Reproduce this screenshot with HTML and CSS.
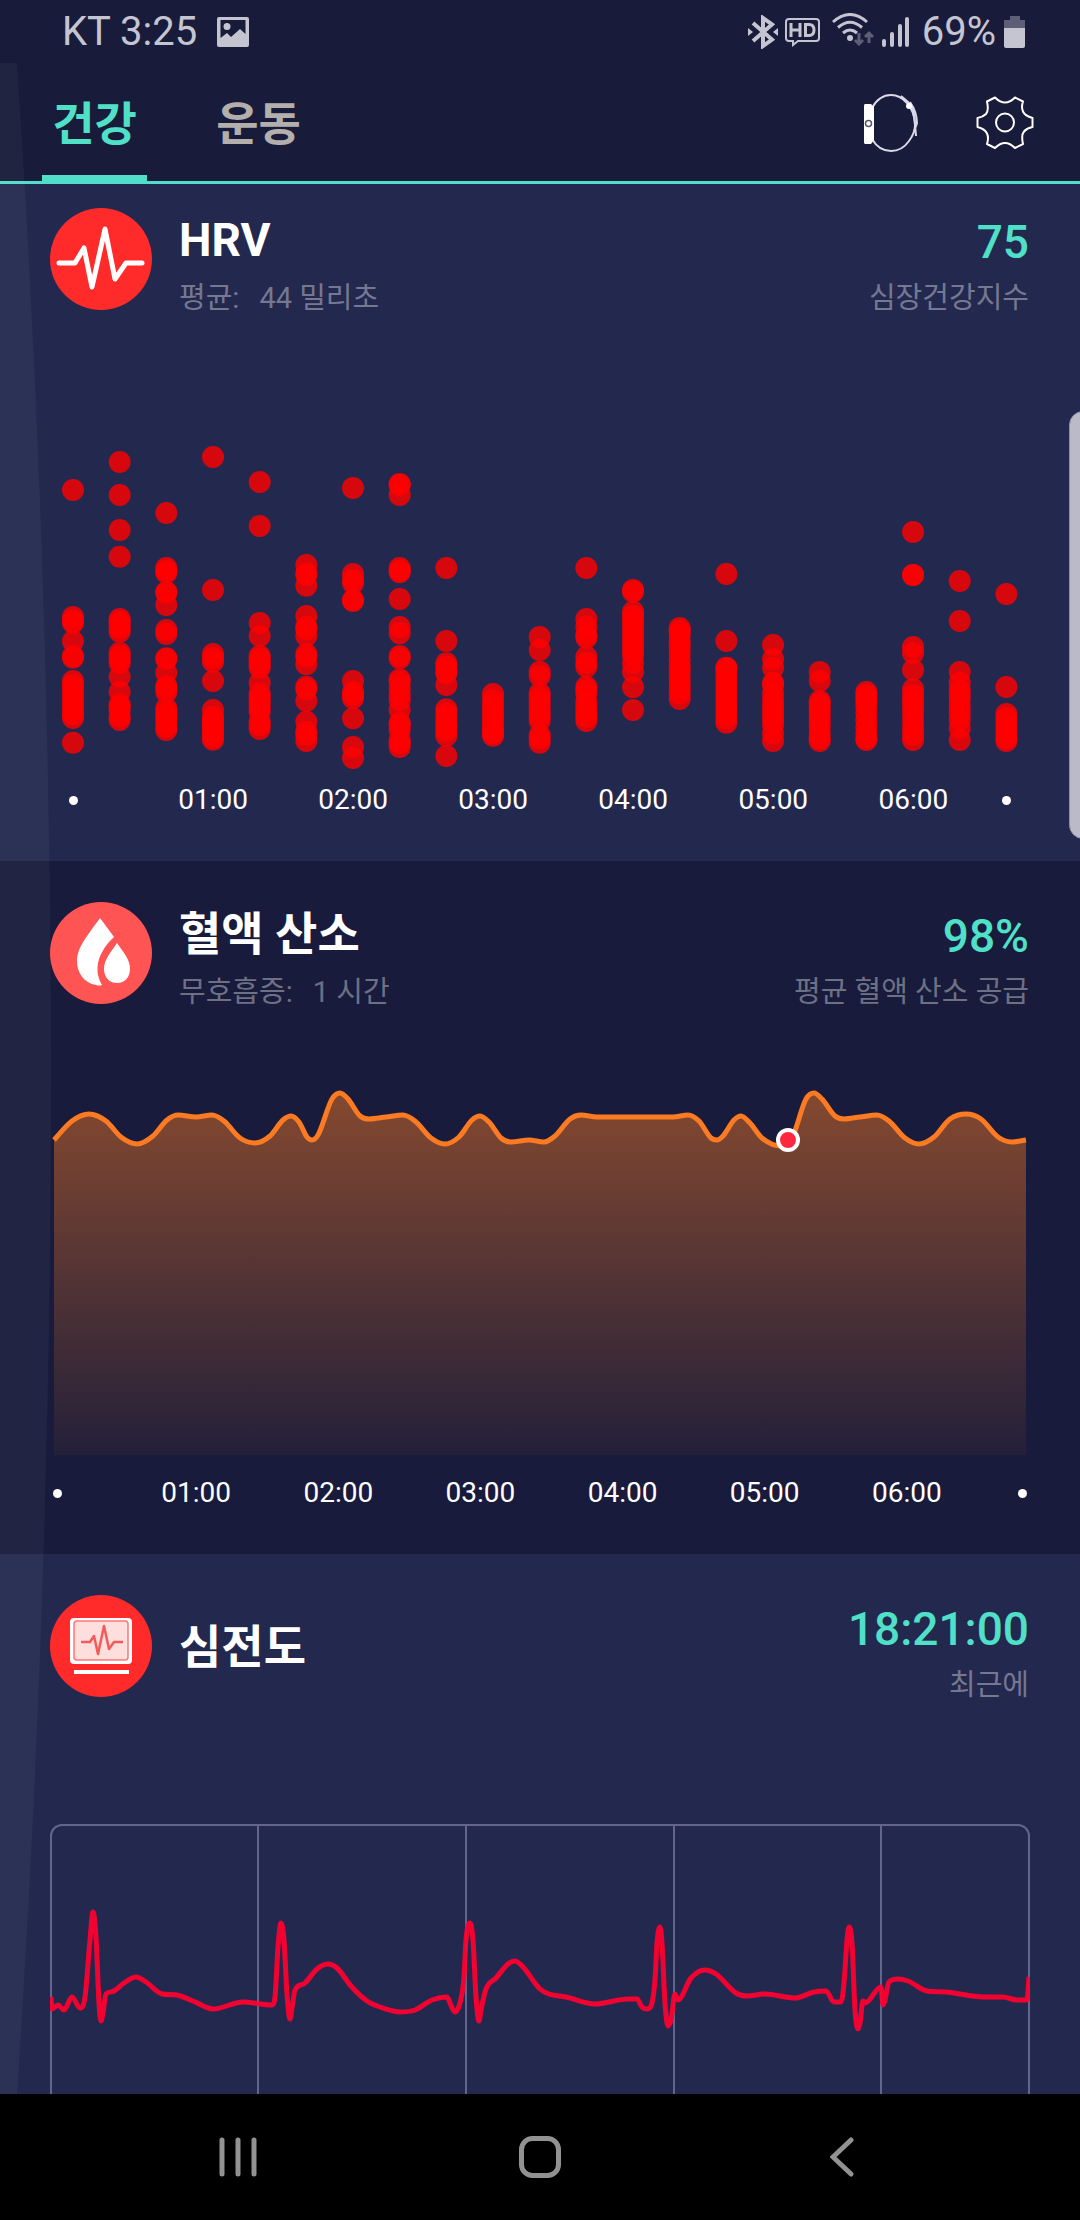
FILE: index.html
```html
<!DOCTYPE html>
<html lang="ko">
<head>
<meta charset="utf-8">
<meta name="viewport" content="width=device-width, initial-scale=1">
<title>건강</title>
<link rel="stylesheet" href="styles.css">
</head>
<body>
<div class="statusbar">
  <span>KT 3:25</span>
  <svg class="photo" width="32" height="30" viewBox="0 0 32 30"><path fill="currentColor" fill-rule="evenodd" d="M2 0H30Q32 0 32 2V28Q32 30 30 30H2Q0 30 0 28V2Q0 0 2 0ZM3.500 3V21L10 16L14 20L23 12L28.500 17V3Z"/><circle cx="10" cy="9.500" r="3.500" fill="currentColor"/></svg>
  <div class="system">
    <svg width="30" height="34" viewBox="0 0 30 34"><path fill="none" stroke="currentColor" stroke-width="4" d="M5 8L24 24.500L15 31V3L24 9.500L5 26"/><path fill="currentColor" d="M0 13L5 17L0 21ZM30 13L25 17L30 21Z"/></svg>
    <svg class="hd" width="36" height="30" viewBox="0 0 36 30"><path fill="none" stroke="currentColor" stroke-width="2" d="M4 2H31Q34 2 34 5V21Q34 24 31 24H13L8 28V24H4Q1 24 1 21V5Q1 2 4 2Z"/><path fill="none" stroke="currentColor" stroke-width="3" d="M6 6V20M15 6V20M6 13H15M20.500 7.500H24Q29 7.500 29 13Q29 18.500 24 18.500H20.500Z"/></svg>
    <svg class="wifi" width="42" height="33" viewBox="0 0 42 33"><g fill="none" stroke="currentColor" stroke-width="3"><path d="M1 9Q18 -6 35 9"/><path d="M6 14.500Q18 4 30 14.500"/><path d="M11 20Q18 14 25 20"/></g><circle cx="18" cy="25" r="3" fill="currentColor"/><path opacity=".4" fill="none" stroke="currentColor" stroke-width="3" d="M27 20V31M23 27L27 31L31 27M37 30V20M33 24L37 20L41 24"/></svg>
    <svg class="signal" width="28" height="31" viewBox="0 0 28 31"><path fill="none" stroke="currentColor" stroke-width="4" stroke-linecap="round" d="M2 25V29M10 18V29M18 10V29M25 3V29"/></svg>
    <span class="percent">69%</span>
    <svg width="22" height="34" viewBox="0 0 22 34"><path opacity=".4" fill="currentColor" d="M6 1H16V5H21V13H0V5H6Z"/><path fill="currentColor" d="M0 13H21V31Q21 33 19 33H2Q0 33 0 31Z"/></svg>
  </div>
</div>

<div class="app">
  <header class="topbar">
    <nav class="tabs" role="tablist">
      <button class="tab active" role="tab" aria-selected="true">건강</button>
      <button class="tab" role="tab" aria-selected="false">운동</button>
    </nav>
    <div class="actions">
      <button class="action" aria-label="시계">
        <svg width="54" height="58" viewBox="0 0 54 58"><path fill="none" stroke="#d9d9ea" stroke-width="2" d="M8 14Q15 1 27 1Q36 1 43 9Q51 18 51 31Q51 39 45 47Q38 57 27 57Q15 57 8 45"/><path fill="none" stroke="#d9d9ea" stroke-width="2" d="M37 2L44 8Q50 15 51 30L52 42M46 8Q53 18 53 29L50 38"/><circle cx="45" cy="12" r="3" fill="#fff"/><path fill="#fff" d="M1 10H7L10 13V46L7 50H1Q0 50 0 48V12Q0 10 1 10Z"/><circle cx="4.500" cy="29.500" r="3" fill="none" stroke="#555870" stroke-width="1.500"/></svg>
      </button>
      <button class="action" aria-label="설정">
        <svg width="58" height="54" viewBox="0 0 58 54" fill="none" stroke="#fff" stroke-width="2" stroke-linejoin="round"><path d="M19 1.500L11 5.500Q13 15 10 18Q7 21 1.500 22V31Q9 33 11 37.500Q13 42 11 48L19 52Q24 47 29 47Q34 47 39 52L47 48Q45 39 48 35.500Q51 32 56.500 31V22Q49 20 47 15.500Q45 11 47 5.500L39 1.500Q34 6.500 29 6.500Q24 6.500 19 1.500Z"/><circle cx="29" cy="26.500" r="9"/></svg>
      </button>
    </div>
  </header>

  <main class="cards">
    <section class="card first">
      <div class="head">
        <svg class="badge" viewBox="0 0 102 102"><circle cx="51" cy="51" r="51" fill="#ff2b2b"/><path fill="none" stroke="#fff" stroke-width="5" stroke-linecap="round" stroke-linejoin="round" d="M9 55H25L34 40L42 79L55 21L65 71L76 55H92"/></svg>
        <div class="info"><h2>HRV</h2><p><span>평균:</span><span>44 밀리초</span></p></div>
        <div class="result"><strong>75</strong><p>심장건강지수</p></div>
      </div>
      <svg class="hrv" id="hrv" viewBox="0 0 1080 350"></svg>
      <ol class="axis axis-hrv"><li class="dot"></li><li>01:00</li><li>02:00</li><li>03:00</li><li>04:00</li><li>05:00</li><li>06:00</li><li class="dot"></li></ol>
    </section>

    <section class="card dark">
      <div class="head">
        <svg class="badge" viewBox="0 0 102 102"><circle cx="51" cy="51" r="51" fill="#ff5454"/><path fill="#fff" d="M50 16Q56 24 64 35C50 48 42 66 52 83Q50 84 46 83C34 81 27 71 27 59C27 45 38 33 50 16ZM67 41C73 50 80 57 80 67C80 75 75 81 67 81C59 81 54 75 54 67C54 57 62 49 67 41Z"/></svg>
        <div class="info"><h2>혈액 산소</h2><p><span>무호흡증:</span><span>1 시간</span></p></div>
        <div class="result"><strong>98%</strong><p>평균 혈액 산소 공급</p></div>
      </div>
      <svg class="spo2" viewBox="0 0 1080 375">
        <defs><linearGradient id="fade" gradientUnits="userSpaceOnUse" x1="0" y1="12" x2="0" y2="375"><stop offset="0" stop-color="#fb7a22" stop-opacity=".48"/><stop offset="1" stop-color="#fb7a22" stop-opacity=".05"/></linearGradient></defs>
        <path id="spo2-area" fill="url(#fade)"/>
        <path id="spo2-line" fill="none" stroke="#fb7a22" stroke-width="5"/>
        <circle cx="788" cy="60" r="10" fill="#ff2840" stroke="#fff" stroke-width="4"/>
      </svg>
      <ol class="axis axis-spo2"><li class="dot"></li><li>01:00</li><li>02:00</li><li>03:00</li><li>04:00</li><li>05:00</li><li>06:00</li><li class="dot"></li></ol>
    </section>

    <section class="card">
      <div class="head">
        <svg class="badge" viewBox="0 0 102 102"><circle cx="51" cy="51" r="51" fill="#ff2b2b"/><rect x="20" y="23" width="62" height="46" rx="4" fill="#fff"/><rect x="24" y="26" width="54" height="39" rx="3" fill="#ffdede" stroke="#f77" stroke-width="1.500"/><path fill="none" stroke="#f55a5a" stroke-width="2.500" stroke-linejoin="round" d="M31 47H40L44 41L48 59L54 31L59 54L64 47H73"/><path fill="#fff" d="M24 75H79V79H24Z"/></svg>
        <div class="info middle"><h2>심전도</h2></div>
        <div class="result"><strong>18:21:00</strong><p>최근에</p></div>
      </div>
      <svg class="ecg" viewBox="0 0 980 400">
        <g fill="none" stroke="#62668f" stroke-width="2"><rect x="1" y="1" width="978" height="398" rx="11"/><path d="M208 1V399M416 1V399M624 1V399M831 1V399"/></g>
        <path id="ecg-line" fill="none" stroke="#ff0030" stroke-opacity=".94" stroke-width="5" stroke-linejoin="round"/>
      </svg>
    </section>
  </main>

  <svg class="glow" viewBox="0 0 60 2030" preserveAspectRatio="none"><path fill="#fff" fill-opacity=".045" d="M0 0H17Q85 1015 17 2030H0Z"/></svg>
  <div class="edge-handle"></div>
</div>

<nav class="sysnav">
  <button aria-label="최근 앱"><svg width="40" height="42" viewBox="0 0 40 42"><path stroke="#929292" stroke-width="5" stroke-linecap="round" d="M4 4V38M20 4V38M36 4V38"/></svg></button>
  <button aria-label="홈"><svg width="42" height="42" viewBox="0 0 42 42"><rect x="2.500" y="2.500" width="37" height="37" rx="11" fill="none" stroke="#929292" stroke-width="5"/></svg></button>
  <button aria-label="뒤로"><svg width="24" height="42" viewBox="0 0 24 42"><path fill="none" stroke="#929292" stroke-width="5" stroke-linecap="round" d="M21 4L3 21L21 38"/></svg></button>
</nav>
<script src="script.js"></script>
</body>
</html>
```
FILE: styles.css
```css
* { box-sizing: border-box; }

body {
  margin: 0;
  height: 100vh;
  display: flex;
  flex-direction: column;
  background: #181b39;
  color: #fff;
  font-family: Roboto, "Noto Sans CJK KR", sans-serif;
}

h2, p, ol { margin: 0; padding: 0; }
svg { display: block; flex: none; }

button {
  margin: 0;
  padding: 0;
  border: 0;
  background: none;
  color: inherit;
  font: inherit;
}

/* phone status bar */
.statusbar {
  flex: none;
  display: flex;
  align-items: center;
  height: 63px;
  padding: 0 54px 0 62px;
  font-size: 40px;
  line-height: 62px;
  color: #c5c5d2;
}
.photo { margin-left: 20px; }
.system { margin-left: auto; display: flex; align-items: center; }
.hd { margin-left: 7px; }
.wifi { margin-left: 11px; margin-bottom: 4px; }
.signal { margin-left: 8px; }
.percent { margin: 0 8px 0 12px; }

/* tabs */
.app {
  flex: 1;
  min-height: 0;
  position: relative;
  display: flex;
  flex-direction: column;
  overflow: hidden;
}
.topbar {
  flex: none;
  display: flex;
  justify-content: space-between;
  height: 121px;
  padding: 0 46px 0 42px;
  border-bottom: 3px solid #50dcc8;
}
.tabs { display: flex; gap: 59px; }
.tab {
  width: 105px;
  padding-top: 2px;
  border-bottom: 6px solid transparent;
  font-size: 46px;
  font-weight: 700;
  color: #b3afac;
}
.tab.active { color: #50e0c8; border-color: #50e0c8; }
.actions { display: flex; align-items: center; gap: 58px; padding-top: 2px; }

/* cards */
.cards { flex: 1; min-height: 0; overflow: hidden; }
.card { padding-top: 41px; background: #23284f; }
.card.first { padding-top: 24px; }
.card.dark { background: #181b3b; }

.head {
  display: flex;
  height: 120px;
  padding: 0 51px 0 50px;
}
.badge { width: 102px; height: 102px; margin-right: 27px; }
.info { flex: 1; }
.info.middle { padding-top: 20px; }
h2 { font-size: 46px; line-height: 64px; font-weight: 700; }
.head p { font-size: 29px; line-height: 44px; color: rgba(255, 255, 255, .38); }
.info p { display: flex; gap: 20px; padding-top: 4px; }
.result { text-align: right; }
.result strong {
  display: block;
  font-size: 46px;
  line-height: 68px;
  font-weight: 500;
  color: #50e0c8;
}

.hrv { width: 100%; margin-top: 92px; }
.spo2 { width: 100%; margin-top: 58px; }
.ecg { width: calc(100% - 100px); margin: 109px 50px 0; }

.axis {
  display: grid;
  list-style: none;
  font-size: 28px;
  line-height: 40px;
  text-align: center;
}
.axis-hrv { grid-template-columns: repeat(7, 3fr) 1fr; padding: 10px 50px 41px 3px; }
.axis-spo2 { grid-template-columns: 72fr repeat(6, 142fr) 49fr; padding: 18px 53px 41px; }
.dot {
  width: 9px;
  height: 9px;
  border-radius: 50%;
  background: #fff;
  align-self: center;
  justify-self: center;
}
.axis-spo2 .dot { justify-self: start; }
.axis-spo2 .dot:last-child { justify-self: end; }

/* overlays */
.glow {
  position: absolute;
  left: 0;
  top: 0;
  width: 60px;
  height: 100%;
  pointer-events: none;
}
.edge-handle {
  position: absolute;
  right: -20px;
  top: 348px;
  width: 31px;
  height: 428px;
  border: 1px solid #8e8fa3;
  border-radius: 14px;
  background: #babac9;
}

/* system navigation */
.sysnav {
  flex: none;
  display: flex;
  height: 126px;
  padding: 0 87px;
  background: #000;
}
.sysnav button {
  flex: 1;
  display: flex;
  align-items: center;
  justify-content: center;
}
```
FILE: script.js
```js
// HRV samples, one list for every 20 minutes; three units make one chart pixel
const hrv = [
  [270, 651, 662, 668, 724, 768, 773, 843, 855, 870, 885, 900, 915, 930, 943, 954, 1028],
  [186, 285, 390, 470, 657, 665, 675, 685, 695, 758, 768, 780, 790, 830, 876, 913, 920, 930, 950, 960],
  [339, 504, 512, 518, 576, 578, 615, 690, 702, 775, 777, 818, 858, 865, 877, 925, 935, 945, 955, 968, 980, 990],
  [171, 570, 762, 775, 785, 843, 930, 950, 960, 970, 980, 990, 1000, 1012, 1019],
  [246, 378, 669, 708, 768, 775, 785, 795, 803, 848, 880, 890, 900, 912, 925, 935, 965, 975, 987],
  [495, 520, 525, 557, 648, 680, 688, 708, 762, 770, 793, 860, 868, 903, 965, 995, 1005, 1023],
  [264, 522, 540, 550, 600, 603, 843, 876, 885, 895, 955, 1041, 1074],
  [252, 255, 285, 504, 512, 517, 597, 681, 700, 768, 775, 838, 845, 865, 885, 900, 930, 968, 975, 990, 1020, 1030, 1041],
  [504, 723, 790, 800, 815, 820, 855, 928, 940, 955, 970, 980, 992, 1007, 1068],
  [882, 900, 915, 930, 945, 960, 975, 990, 1000, 1007],
  [711, 750, 815, 828, 880, 890, 905, 920, 935, 950, 962, 1005, 1015, 1028],
  [504, 657, 680, 705, 713, 770, 788, 800, 860, 868, 880, 905, 920, 935, 950, 963],
  [570, 575, 635, 648, 660, 675, 690, 705, 720, 735, 750, 765, 790, 815, 862, 930],
  [684, 693, 705, 725, 740, 760, 780, 800, 815, 835, 850, 865, 880, 897],
  [522, 723, 803, 805, 820, 835, 850, 865, 880, 895, 910, 925, 940, 955, 968],
  [735, 777, 803, 848, 855, 880, 900, 915, 930, 945, 960, 975, 1000, 1023],
  [816, 843, 903, 910, 920, 935, 950, 965, 980, 1000, 1015, 1023],
  [876, 885, 895, 905, 920, 940, 960, 980, 1000, 1015, 1020],
  [396, 525, 525, 741, 760, 810, 868, 885, 900, 915, 930, 950, 970, 990, 1005, 1020],
  [543, 663, 816, 848, 870, 885, 900, 920, 940, 960, 985, 1020],
  [582, 861, 942, 955, 970, 985, 1000, 1015, 1023]
];

const chart = document.getElementById("hrv");
hrv.forEach((column, i) => {
  column.forEach((v) => {
    const c = document.createElementNS("http://www.w3.org/2000/svg", "circle");
    c.setAttribute("cx", 73 + i * 46.67);
    c.setAttribute("cy", v / 3 - 20);
    c.setAttribute("r", 11);
    c.setAttribute("fill", "rgba(255,0,0,.82)");
    chart.appendChild(c);
  });
});

// Smooth curve through [x, y] pairs, flat at every peak and trough
function curve(p) {
  const slope = (a, b) => (b[1] - a[1]) / (b[0] - a[0]);
  const m = p.map((q, i) => {
    if (i === 0) return slope(p[0], p[1]);
    if (i === p.length - 1) return slope(p[i - 1], q);
    const a = slope(p[i - 1], q);
    const b = slope(q, p[i + 1]);
    if (a * b <= 0) return 0;
    const limit = 3 * Math.min(Math.abs(a), Math.abs(b));
    return Math.sign(a) * Math.min(Math.abs(a + b) / 2, limit);
  });
  let d = `M${p[0][0]} ${p[0][1]}`;
  for (let i = 1; i < p.length; i++) {
    const h = (p[i][0] - p[i - 1][0]) / 3;
    d += `C${p[i - 1][0] + h} ${p[i - 1][1] + h * m[i - 1]} ${p[i][0] - h} ${p[i][1] - h * m[i]} ${p[i][0]} ${p[i][1]}`;
  }
  return d;
}

const spo2 = [
  [54, 60], [72, 41], [89, 34], [106, 41], [121, 57], [137, 64], [153, 56], [167, 40], [178, 35], [196, 37], [212, 35],
  [224, 41], [240, 58], [255, 63], [270, 56], [283, 40], [291, 36], [299, 42], [307, 57], [312, 60], [318, 55], [332, 19],
  [340, 13], [348, 19], [360, 36], [369, 39], [386, 37], [403, 35], [415, 41], [431, 58], [445, 64], [459, 57], [472, 40],
  [480, 36], [489, 42], [501, 58], [511, 62], [529, 60], [544, 62], [555, 56], [570, 39], [581, 35], [597, 37], [673, 37],
  [688, 35], [699, 41], [711, 58], [717, 60], [723, 56], [734, 40], [741, 36], [750, 43], [762, 58], [781, 66], [792, 58],
  [806, 19], [814, 13], [822, 19], [835, 36], [844, 39], [860, 37], [877, 35], [889, 41], [905, 58], [919, 64], [934, 57],
  [950, 39], [966, 34], [981, 39], [998, 57], [1012, 62], [1026, 60]
];
document.getElementById("spo2-line").setAttribute("d", curve(spo2));
document.getElementById("spo2-area").setAttribute("d", curve(spo2) + "V375H54Z");

const ecg = [
  [1, 173], [2, 185], [8, 181], [14, 186], [22, 173], [30, 184], [35, 173], [40, 116], [43, 88], [46, 113], [49, 179],
  [51, 197], [53, 189], [56, 170], [64, 167], [74, 159], [86, 153], [96, 158], [112, 170], [127, 171], [143, 177],
  [163, 185], [193, 178], [222, 181], [225, 173], [228, 123], [231, 99], [234, 116], [237, 170], [240, 195], [242, 184],
  [245, 166], [255, 159], [267, 145], [278, 140], [287, 144], [301, 162], [317, 177], [336, 185], [350, 188], [365, 186],
  [382, 176], [397, 173], [400, 179], [405, 188], [410, 179], [414, 153], [416, 116], [420, 99], [423, 116], [426, 173],
  [429, 197], [431, 186], [436, 165], [446, 154], [458, 140], [465, 137], [473, 143], [490, 165], [499, 170], [516, 173],
  [545, 180], [578, 175], [587, 175], [592, 183], [597, 185], [601, 182], [605, 156], [607, 119], [610, 103], [612, 119],
  [615, 179], [618, 202], [621, 196], [625, 170], [628, 176], [641, 154], [655, 146], [666, 150], [686, 169], [697, 172],
  [715, 170], [745, 174], [764, 168], [776, 167], [784, 178], [791, 178], [794, 159], [797, 116], [799, 103], [802, 119],
  [805, 186], [808, 205], [810, 199], [813, 177], [815, 179], [831, 163], [833, 181], [835, 176], [839, 158], [848, 155],
  [858, 157], [877, 167], [896, 168], [934, 173], [953, 173], [967, 176], [977, 176], [979, 153]
];
document.getElementById("ecg-line").setAttribute("d", curve(ecg));
```
